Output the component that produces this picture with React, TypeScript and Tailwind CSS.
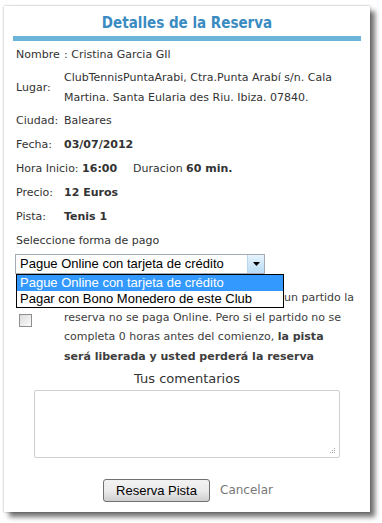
import React from 'react'

const verdana = "font-['DejaVu_Sans',Verdana,sans-serif]"
const arial = "font-['Liberation_Sans',Arial,sans-serif]"

const Row = ({ label, children, h = 'h-6' }: { label: string; children: React.ReactNode; h?: string }) => (
    <div className={`flex items-center ${h}`}>
        <div className='w-12 shrink-0'>{label}</div>
        <div className='flex-1'>{children}</div>
    </div>
)

const App = () => {
    return (
        <div className='w-[382px] h-[523px] bg-white pt-[6px] pl-[4px]'>
            <div className={`relative w-[366px] h-[506px] bg-white shadow-[0_0_2px_rgba(0,0,0,0.35),5px_5px_5px_rgba(0,0,0,0.55)] px-[9px] ${verdana} text-[11px] text-[#333]`}>
                <h1 className="text-center font-bold text-[15px] leading-[18px] text-[#3a8bc1] pt-[8px] h-[30px] font-['DejaVu_Sans_Condensed',Tahoma,sans-serif]">Detalles de la Reserva</h1>
                <div className='h-[5px] bg-[#6cb4d8]' />

                <div className='px-[3px] pt-[2px]'>
                    <Row label='Nombre'>: Cristina Garcia GIl</Row>
                    <Row label='Lugar:' h='h-[42px]'>
                        <div className='leading-5'>
                            ClubTennisPuntaArabi, Ctra.Punta Arabí s/n. Cala<br />
                            Martina. Santa Eularia des Riu. Ibiza. 07840.
                        </div>
                    </Row>
                    <Row label='Ciudad:'>Baleares</Row>
                    <Row label='Fecha:'><b>03/07/2012</b></Row>
                    <div className='flex items-center h-6'>
                        Hora Inicio:&nbsp;<b>16:00</b>
                        <span className='ml-4'>Duracion&nbsp;<b>60 min.</b></span>
                    </div>
                    <Row label='Precio:'><b>12 Euros</b></Row>
                    <Row label='Pista:'><b>Tenis 1</b></Row>
                    <div className='flex items-center h-6'>Seleccione forma de pago</div>

                    <div className='relative mt-[1px]'>
                        <div className={`relative z-10 flex items-center w-[250px] h-[20px] border border-[#a5acb5] bg-white ${arial} text-[13px] text-black -ml-[1px]`}>
                            <span className='flex-1 pl-1'>Pague Online con tarjeta de crédito</span>
                            <span className='w-[17px] h-[18px] border-l border-[#b8d6ee] bg-gradient-to-b from-[#e6f4fd] to-[#b9dcf5] flex items-center justify-center'>
                                <svg width='7' height='4' viewBox='0 0 7 4'><path d='M0 0h7L3.5 4z' fill='#000' /></svg>
                            </span>
                        </div>

                        <div className='flex -mt-[6px]'>
                            <div className='w-12 shrink-0 flex items-center'>
                                <span className='ml-[3px] mt-[7px] w-[13px] h-[13px] border border-[#8f8f8f] bg-gradient-to-br from-[#dcdcdc] to-[#fbfbfb]' />
                            </div>
                            <p className='flex-1 leading-[19.75px] text-[#3d3d3d] whitespace-nowrap'>
                                Si no se completa el mínimo de<br />
                                <span className='inline-block w-[220px] overflow-hidden align-top'>jugadores necesarios para formar</span>un partido la<br />
                                reserva no se paga Online. Pero si el partido no se<br />
                                completa 0 horas antes del comienzo, <b>la pista</b><br />
                                <b>será liberada y usted perderá la reserva</b>
                            </p>
                        </div>

                        <div className={`absolute z-20 top-[20px] left-0 w-[268px] border border-black bg-white ${arial} text-[13px] text-black`}>
                            <div className='h-[16px] leading-[16px] bg-[#3399ff] text-white pl-[3px]'>Pague Online con tarjeta de crédito</div>
                            <div className='h-[16px] leading-[16px] pl-[3px]'>Pagar con Bono Monedero de este Club</div>
                        </div>
                    </div>
                </div>

                <div className='text-center text-[13px] leading-[16px] text-[#333] mt-[4px]'>Tus comentarios</div>
                <div className='relative mt-[3px] ml-[21px] w-[306px] h-[68px] border border-[#cfcfcf] rounded-[2px] bg-white'>
                    <svg className='absolute right-[3px] bottom-[3px]' width='7' height='7' viewBox='0 0 7 7'>
                        <rect x='5' y='1' width='1' height='1' fill='#aaa' />
                        <rect x='3' y='3' width='1' height='1' fill='#aaa' />
                        <rect x='5' y='3' width='1' height='1' fill='#aaa' />
                        <rect x='1' y='5' width='1' height='1' fill='#aaa' />
                        <rect x='3' y='5' width='1' height='1' fill='#aaa' />
                        <rect x='5' y='5' width='1' height='1' fill='#aaa' />
                    </svg>
                </div>

                <div className='flex items-center mt-[21px] ml-[90px] gap-[10px]'>
                    <button className={`h-[23px] w-[107px] border border-[#707070] rounded-[3px] bg-gradient-to-b from-[#f2f2f2] via-[#ebebeb] to-[#cfcfcf] ${arial} text-[13px] text-black`}>Reserva Pista</button>
                    <span className='text-[12px] text-[#777]'>Cancelar</span>
                </div>
            </div>
        </div>
    )
}

export default App
